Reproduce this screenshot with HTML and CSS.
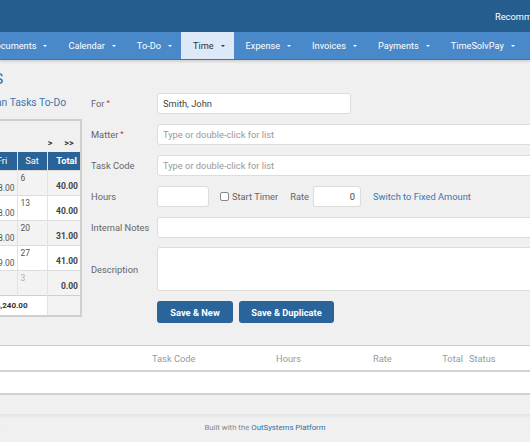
FILE: index.html
```html
<!DOCTYPE html>
<html>
<head>
<meta charset="utf-8">
<title>Time Entries</title>
<link rel="stylesheet" href="styles.css">
</head>
<body>
<header class="topbar">
  <div class="frame topbar-inner">
    <a class="top-link">Recommend TimeSolv</a>
    <a class="top-link">Sign Out</a>
  </div>
</header>
<nav class="nav">
  <div class="frame nav-inner">
    <a class="nav-item">Home</a>
    <a class="nav-item">Matters <span class="caret"></span></a>
    <a class="nav-item">Documents <span class="caret"></span></a>
    <a class="nav-item">Calendar <span class="caret"></span></a>
    <a class="nav-item">To-Do <span class="caret"></span></a>
    <a class="nav-item active">Time <span class="caret"></span></a>
    <a class="nav-item">Expense <span class="caret"></span></a>
    <a class="nav-item">Invoices <span class="caret"></span></a>
    <a class="nav-item">Payments <span class="caret"></span></a>
    <a class="nav-item">TimeSolvPay <span class="caret"></span></a>
    <a class="nav-item">Reports <span class="caret"></span></a>
  </div>
</nav>
<main class="frame main">
  <h1 class="title">TIME ENTRIES</h1>
  <div class="columns">
    <aside class="side">
      <a class="todo-link">Plan Tasks To-Do</a>
      <div class="cal">
        <div class="cal-nav">
          <span class="arrow wide">&lt;&lt;</span>
          <span class="arrow">&lt;</span>
          <span class="month">October 2018</span>
          <span class="arrow">&gt;</span>
          <span class="arrow wide">&gt;&gt;</span>
        </div>
        <table class="cal-table">
          <thead>
            <tr><th>Sun</th><th>Mon</th><th>Tue</th><th>Wed</th><th>Thu</th><th>Fri</th><th>Sat</th><th class="tot-h">Total</th></tr>
          </thead>
          <tbody>
            <tr class="odd">
              <td><div class="day"><span class="d">30</span><span class="h"></span></div></td>
              <td><div class="day"><span class="d">1</span><span class="h">8.00</span></div></td>
              <td><div class="day"><span class="d">2</span><span class="h">8.00</span></div></td>
              <td><div class="day"><span class="d">3</span><span class="h">8.00</span></div></td>
              <td><div class="day"><span class="d">4</span><span class="h">8.00</span></div></td>
              <td><div class="day"><span class="d">5</span><span class="h">8.00</span></div></td>
              <td><div class="day"><span class="d">6</span><span class="h"></span></div></td>
              <td class="tot">40.00</td>
            </tr>
            <tr>
              <td><div class="day"><span class="d">7</span><span class="h"></span></div></td>
              <td><div class="day"><span class="d">8</span><span class="h">8.00</span></div></td>
              <td><div class="day"><span class="d">9</span><span class="h">8.00</span></div></td>
              <td><div class="day"><span class="d">10</span><span class="h">8.00</span></div></td>
              <td><div class="day"><span class="d">11</span><span class="h">8.00</span></div></td>
              <td><div class="day"><span class="d">12</span><span class="h">8.00</span></div></td>
              <td><div class="day"><span class="d">13</span><span class="h"></span></div></td>
              <td class="tot">40.00</td>
            </tr>
            <tr class="odd">
              <td><div class="day"><span class="d">14</span><span class="h"></span></div></td>
              <td><div class="day"><span class="d">15</span><span class="h">7.00</span></div></td>
              <td><div class="day"><span class="d">16</span><span class="h">8.00</span></div></td>
              <td><div class="day"><span class="d">17</span><span class="h">8.00</span></div></td>
              <td><div class="day"><span class="d">18</span><span class="h"></span></div></td>
              <td><div class="day"><span class="d">19</span><span class="h">8.00</span></div></td>
              <td><div class="day"><span class="d">20</span><span class="h"></span></div></td>
              <td class="tot">31.00</td>
            </tr>
            <tr>
              <td><div class="day"><span class="d">21</span><span class="h"></span></div></td>
              <td><div class="day"><span class="d">22</span><span class="h">8.00</span></div></td>
              <td><div class="day"><span class="d">23</span><span class="h">8.00</span></div></td>
              <td><div class="day"><span class="d">24</span><span class="h">8.00</span></div></td>
              <td><div class="day"><span class="d">25</span><span class="h">8.00</span></div></td>
              <td><div class="day"><span class="d">26</span><span class="h">9.00</span></div></td>
              <td><div class="day"><span class="d">27</span><span class="h"></span></div></td>
              <td class="tot">41.00</td>
            </tr>
            <tr class="odd">
              <td><div class="day"><span class="d">28</span><span class="h"></span></div></td>
              <td><div class="day"><span class="d">29</span><span class="h"></span></div></td>
              <td><div class="day"><span class="d">30</span><span class="h"></span></div></td>
              <td><div class="day"><span class="d">31</span><span class="h"></span></div></td>
              <td><div class="day"><span class="d next">1</span><span class="h"></span></div></td>
              <td><div class="day"><span class="d next">2</span><span class="h"></span></div></td>
              <td><div class="day"><span class="d next">3</span><span class="h"></span></div></td>
              <td class="tot">0.00</td>
            </tr>
            <tr class="sum">
              <td colspan="7" class="sum-cell">$4,240.00</td>
              <td class="sum-tot"></td>
            </tr>
          </tbody>
        </table>
      </div>
    </aside>

    <form class="entry">
      <label class="lbl">For<span class="req">*</span></label>
      <div class="field"><input class="inp inp-for" type="text" value="Smith, John"></div>

      <label class="lbl">Matter<span class="req">*</span></label>
      <div class="field"><input class="inp inp-full" type="text" placeholder="Type or double-click for list"></div>

      <label class="lbl">Task Code</label>
      <div class="field"><input class="inp inp-full" type="text" placeholder="Type or double-click for list"></div>

      <label class="lbl">Hours</label>
      <div class="field hours-row">
        <input class="inp inp-hours" type="text">
        <label class="timer"><span class="check"></span>Start Timer</label>
        <span class="rate-lbl">Rate</span>
        <input class="inp inp-rate" type="text" value="0">
        <a class="switch">Switch to Fixed Amount</a>
      </div>

      <label class="lbl">Internal Notes</label>
      <div class="field"><input class="inp inp-full" type="text"></div>

      <label class="lbl">Description</label>
      <div class="field"><textarea class="inp area"></textarea></div>

      <span></span>
      <div class="field buttons">
        <button type="button" class="btn btn-new">Save &amp; New</button>
        <button type="button" class="btn btn-dup">Save &amp; Duplicate</button>
      </div>
    </form>
  </div>

  <div class="entries">
    <div class="ent-row ent-head">
      <span>Date</span>
      <span>Matter</span>
      <span>Task Code</span>
      <span>Hours</span>
      <span>Rate</span>
      <span class="right">Total</span>
      <span class="status">Status</span>
      <span></span>
    </div>
    <div class="ent-row ent-empty"></div>
  </div>
</main>
<footer class="footer">
  <div class="frame footer-inner">Built with the <a class="os-link">OutSystems Platform</a></div>
</footer>
</body>
</html>
```

FILE: styles.css
```css
* { box-sizing: border-box; }
html, body { margin: 0; height: 442px; overflow: hidden; }
body {
  font-family: Roboto, "Liberation Sans", sans-serif;
  background: #f0f0f0;
  color: #666;
  font-size: 9.3px;
}
a { text-decoration: none; }

.frame { width: 860px; margin-left: -165px; }

/* top bar */
.topbar { background: #255d8e; height: 32px; }
.topbar-inner {
  display: flex; justify-content: flex-end; align-items: center;
  height: 32px; gap: 24px; padding-right: 48px;
}
.top-link { color: #fff; font-size: 9.3px; white-space: nowrap; }

/* nav */
.nav {
  background: #4a89c9; height: 28px;
  box-shadow: 0 2px 2px rgba(0, 0, 0, 0.12);
  border-bottom: 1px solid #3d73a8;
}
.nav-inner { display: flex; height: 27px; padding-left: 33px; }
.nav-item {
  display: flex; align-items: center; gap: 7px;
  padding: 0 9px 0 12px; color: #fff; font-size: 9.2px; white-space: nowrap;
}
.nav-item.active { background: #dde9f8; color: #333; }
.caret {
  width: 0; height: 0;
  border-left: 2px solid transparent; border-right: 2px solid transparent;
  border-top: 2.5px solid currentColor;
}

/* main */
.main { padding-top: 10px; }
.title {
  margin: 0 0 4px 68px; font-size: 15.5px; line-height: 19px;
  font-weight: normal; color: #2f6ea6; white-space: nowrap;
}
.columns { display: flex; gap: 9px; align-items: flex-start; }

.side { width: 247px; flex: none; display: flex; flex-direction: column; }
.todo-link {
  display: block; padding: 2px 0 0 152px; line-height: 16px;
  font-size: 10.3px; color: #3a76ae; margin-bottom: 8px; white-space: nowrap;
}

.cal { border: 2px solid #cfcfcf; background: #f0f0f0; }
.cal-nav {
  display: flex; align-items: center; height: 31px; padding-top: 13px;
  font-size: 9px; font-weight: bold; color: #333; line-height: 16px;
}
.arrow { width: 16px; text-align: center; }
.arrow.wide { width: 22px; }
.month { flex: 1; text-align: center; font-weight: bold; color: #2f6ea6; }

.cal-table {
  width: 243px; table-layout: fixed; border-collapse: collapse;
  font-size: 8.5px;
}
.cal-table th {
  background: #2a6396; color: #fff; font-weight: normal;
  height: 18px; padding: 0; text-align: center;
  border-left: 1px solid #d6e2ee; font-size: 9.3px;
}
.cal-table th:first-child { border-left: none; }
.cal-table th.tot-h { width: 33px; text-align: right; padding-right: 3px; font-weight: bold; }
.cal-table td {
  padding: 0; height: 25px; vertical-align: top;
  border-left: 1px solid #e2e2e2; border-top: 1px solid #dcdcdc;
}
.cal-table td:first-child { border-left: none; }
.cal-table tr { background: #fff; }
.cal-table tr.odd { background: #f3f3f3; }
.day {
  display: flex; flex-direction: column; justify-content: space-between;
  height: 24px; padding: 2px 2px 2px 3px; color: #555;
}
.d { font-size: 8.5px; line-height: 10px; }
.d.next { color: #b0b0b0; }
.h { text-align: right; font-size: 8.5px; line-height: 10px; }
.tot {
  text-align: right; vertical-align: bottom !important;
  font-weight: bold; color: #444; padding: 0 2px 4px 0 !important;
}
.sum td { height: 20px; border-top: 1px solid #cfcfcf; }
.sum-cell {
  background: #fff; text-align: right; padding-right: 19px !important;
  font-weight: bold; color: #333; font-size: 8px; vertical-align: middle !important;
}
.sum-tot { background: #f3f3f3; }

/* form */
.entry {
  flex: 1; display: grid; grid-template-columns: 66px 1fr;
  row-gap: 10px; align-items: center; padding-right: 20px;
}
.lbl { color: #666; font-size: 9.3px; white-space: nowrap; }
.req { color: #c9302c; font-size: 8px; vertical-align: top; margin-left: 2px; }
.field { display: flex; align-items: center; }
.inp {
  height: 21px; border: 1px solid #dcdcdc; border-radius: 3px;
  background: #fff; font-family: inherit; font-size: 9.3px; color: #444;
  padding: 0 5px; outline: none;
}
.inp::placeholder { color: #999; }
.inp-for { width: 194px; }
.inp-full { width: 100%; }
.inp-hours { width: 52px; }
.timer { display: flex; align-items: center; margin-left: 11px; color: #666; }
.check {
  width: 9px; height: 9px; border: 1px solid #888; border-radius: 2px;
  background: #fff; margin-right: 3px;
}
.rate-lbl { margin-left: 12px; color: #666; }
.inp-rate { width: 48px; margin-left: 4px; text-align: right; }
.switch { margin-left: 12px; color: #3a76ae; white-space: nowrap; }
.area { width: 100%; height: 44px; resize: none; margin-top: -1px; }
.buttons { gap: 6px; }
.btn {
  height: 22px; border: none; border-radius: 3px; background: #29649a;
  color: #fff; font-family: inherit; font-size: 9.3px; font-weight: bold;
  padding: 0; cursor: pointer;
}
.btn-new { width: 76px; }
.btn-dup { width: 95px; }

/* entries */
.entries { margin-top: 22px; background: #fff; }
.ent-row {
  display: grid;
  grid-template-columns: 100px 212px 124px 97px 47px 43px 80px 1fr;
  padding-left: 5px;
}
.ent-head {
  height: 27px; align-items: center; color: #999; font-size: 9.3px;
  border-top: 1px solid #cdcdcd; border-bottom: 2px solid #d2d2d2;
}
.ent-head .right { text-align: right; }
.ent-head .status { padding-left: 6px; }
.ent-empty { height: 23px; border-bottom: 2px solid #d2d2d2; }

/* footer */
.footer {
  margin-top: 19px; padding-top: 8px;
  border-top: 1px solid #e4e4e4;
  box-shadow: inset 0 2px 2px rgba(0, 0, 0, 0.04);
}
.footer-inner { text-align: center; font-size: 7.8px; color: #888; }
.os-link { color: #2f6ea6; }
```
